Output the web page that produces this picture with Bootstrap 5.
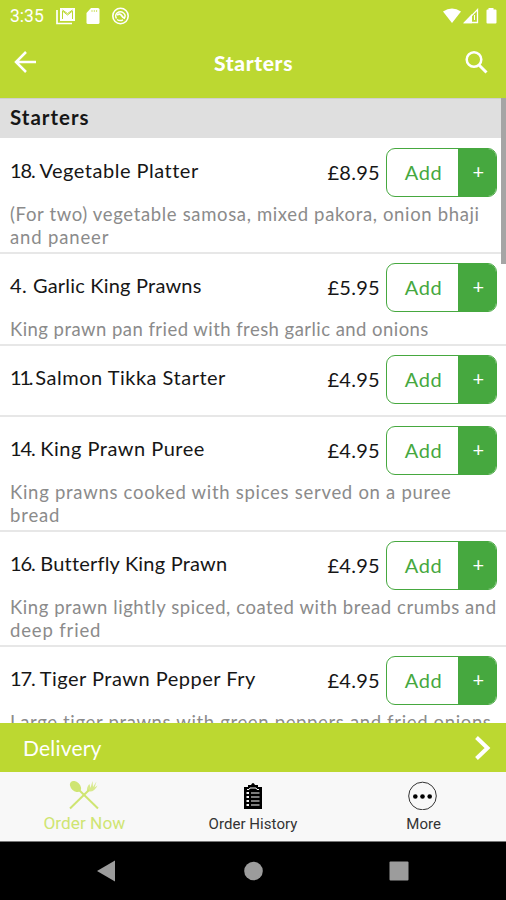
<!DOCTYPE html>
<html lang="en">
<head>
<meta charset="utf-8">
<meta name="viewport" content="width=device-width, initial-scale=1">
<title>Starters</title>
<link href="https://cdn.jsdelivr.net/npm/bootstrap@5.3.0/dist/css/bootstrap.min.css" rel="stylesheet">
<style>
  :root { --lime: #bcd831; --leaf: #46a83f; }
  body { font-family: Lato, "Open Sans", sans-serif; color: #161616; }
  svg { display: block; flex: none; }
  .phone { width: 506px; height: 900px; }
  .bg-lime { background: var(--lime); }
  .status { height: 32px; padding: 0 9px 0 10px; font: 17.5px/32px Roboto, sans-serif; }
  .notices { margin-left: 12px; gap: 10px; }
  .titlebar { height: 65.5px; padding: 0 18px 5px 14px; }
  .titlebar h1 { font-size: 21px; font-weight: 900; letter-spacing: .65px; padding-left: 5px; }
  .viewport { height: 625.5px; }
  .group-title { height: 40px; margin-bottom: 1px; background: #dfdfdf; border-top: 1px solid #cfcfcf; font-size: 20.5px; line-height: 36px; font-weight: 700; letter-spacing: 1px; padding-left: 10px; }
  .dish { padding: 9px 9px 0 10px; border-bottom: 2px solid #e7e7e7; }
  .dish-main { height: 49px; }
  .dish-name { font-size: 20px; letter-spacing: .5px; line-height: 45px; }
  .num { letter-spacing: -1.1px; }
  .num-slim { letter-spacing: -2.2px; margin-right: -1.6px; }
  .snug { letter-spacing: .2px; }
  .price { font-size: 20px; letter-spacing: .3px; line-height: 48px; margin-right: 6px; }
  .about { font-size: 18.5px; letter-spacing: .65px; line-height: 23px; color: #8b8b8b; padding: 6px 0 3px; white-space: nowrap; }
  .about.tight { letter-spacing: .56px; }
  .about.tighter { letter-spacing: .45px; }
  .about.loose { letter-spacing: .71px; }
  .about .end { letter-spacing: .85px; }
  .bare { padding-bottom: 11.2px; }
  .add { width: 111px; height: 49px; border: 1.5px solid var(--leaf); border-radius: 9px; color: var(--leaf); background: #fff; font-size: 20px; letter-spacing: .6px; padding: 0; }
  .add .word { padding-left: 2px; }
  .add .plus { width: 38px; background: var(--leaf); color: #fff; padding: 0 0 2px 3px; }
  .thumb { width: 5px; height: 166px; background: #a5a5a5; right: 0; top: 0; }
  .delivery { height: 49px; padding: 0 15px 0 23px; font-size: 21px; letter-spacing: .2px; }
  .tabs { height: 70px; background: #f8f8f8; border-bottom: 1px solid #777; font: 15px/18px Roboto, sans-serif; color: #333; }
  .tabs .caption { margin-top: 5px; letter-spacing: .05px; }
  .tabs .now { color: #cfe572; font-size: 17.3px; }
  .sysnav { height: 58px; background: #000; }
</style>
</head>
<body>
<div class="phone d-flex flex-column overflow-hidden bg-white">
  <header class="bg-lime text-white flex-shrink-0">
    <div class="status d-flex align-items-center">
      <span>3:35</span>
      <div class="notices d-flex align-items-center">
        <svg width="20" height="18" viewBox="0 0 20 18"><path d="M1 3v13.500h15" fill="none" stroke="#fff" stroke-width="1.700"/><path d="M4 1h15v13H4z" fill="#fff"/><path d="M6.500 12V4l5 4 5-4v8M6.500 3l5 3.600 5-3.600" fill="none" stroke="#bcd831" stroke-width="1"/></svg>
        <svg width="14" height="16" viewBox="0 0 14 16"><path d="M5 0h7q1.500 0 1.500 1.500v13q0 1.500-1.500 1.500H2Q.5 16 .5 14.500V5z" fill="#fff"/><path d="M6 2v2M8.300 2v2M10.600 2v2" stroke="#bcd831" stroke-width=".7"/></svg>
        <svg width="20" height="18" viewBox="-1 0 19 18" fill="none" stroke="#fff"><circle cx="9" cy="9" r="7.700" stroke-width="1.600"/><path d="M5 11.500A4.500 4.500 0 0 1 5.500 6Q9 3.500 12 6t.5 5.500M5.500 12.500q3 2 6 .3" stroke-width="1.400"/><path d="M5.500 8q3-2 4.500.5t3.500 3" stroke-width="1.800"/></svg>
      </div>
      <svg class="ms-auto" width="55" height="18" viewBox="0 0 55 18"><path d="M1 4.500Q10-1.500 19 4.500L10 16z" fill="#fff"/><path d="M35.500 2.500V15.500H23z" fill="none" stroke="#fff" stroke-width="1.300"/><path d="M21 16.200L30 7v9.200z" fill="#fff"/><path d="M32.500 8v5" stroke="#fff"/><path d="M46.500 1h5v1.500h2q1 0 1 1v12q0 1-1 1h-8q-1 0-1-1v-12q0-1 1-1h1z" fill="#fff"/></svg>
    </div>
    <div class="titlebar d-flex align-items-center justify-content-between">
      <svg width="24" height="24" viewBox="0 0 24 24" fill="none" stroke="#fff" stroke-width="2.500"><path d="M22 12H2M12 2L2 12l10 10"/></svg>
      <h1 class="m-0">Starters</h1>
      <svg width="24" height="24" viewBox="0 0 24 24" fill="none" stroke="#fff"><circle cx="10" cy="9.500" r="7.300" stroke-width="2.500"/><path d="M14.500 14.500L22.500 22.500" stroke-width="3"/></svg>
    </div>
  </header>

  <main class="viewport position-relative overflow-hidden flex-shrink-0">
    <div class="group-title">Starters</div>
    <div class="dish">
      <div class="dish-main d-flex"><span class="dish-name me-auto"><span class="num">18.</span> Vegetable Platter</span><span class="price">£8.95</span><button class="add d-flex overflow-hidden align-items-stretch"><span class="word flex-fill align-self-center">Add</span><span class="plus d-flex align-items-center justify-content-center">+</span></button></div>
      <div class="about">(For two) vegetable samosa, mixed pakora, onion bhaji<br><span class="end">and paneer</span></div>
    </div>
    <div class="dish">
      <div class="dish-main d-flex"><span class="dish-name me-auto">4. <span class="snug">Garlic King Prawns</span></span><span class="price">£5.95</span><button class="add d-flex overflow-hidden align-items-stretch"><span class="word flex-fill align-self-center">Add</span><span class="plus d-flex align-items-center justify-content-center">+</span></button></div>
      <div class="about tighter">King prawn pan fried with fresh garlic and onions</div>
    </div>
    <div class="dish bare">
      <div class="dish-main d-flex"><span class="dish-name me-auto"><span class="num-slim">11.</span> Salmon Tikka Starter</span><span class="price">£4.95</span><button class="add d-flex overflow-hidden align-items-stretch"><span class="word flex-fill align-self-center">Add</span><span class="plus d-flex align-items-center justify-content-center">+</span></button></div>
    </div>
    <div class="dish">
      <div class="dish-main d-flex"><span class="dish-name me-auto"><span class="num">14.</span> King Prawn Puree</span><span class="price">£4.95</span><button class="add d-flex overflow-hidden align-items-stretch"><span class="word flex-fill align-self-center">Add</span><span class="plus d-flex align-items-center justify-content-center">+</span></button></div>
      <div class="about loose">King prawns cooked with spices served on a puree<br><span class="end">bread</span></div>
    </div>
    <div class="dish">
      <div class="dish-main d-flex"><span class="dish-name me-auto"><span class="num">16.</span> <span class="snug">Butterfly King Prawn</span></span><span class="price">£4.95</span><button class="add d-flex overflow-hidden align-items-stretch"><span class="word flex-fill align-self-center">Add</span><span class="plus d-flex align-items-center justify-content-center">+</span></button></div>
      <div class="about tight">King prawn lightly spiced, coated with bread crumbs and<br><span class="end">deep fried</span></div>
    </div>
    <div class="dish">
      <div class="dish-main d-flex"><span class="dish-name me-auto"><span class="num">17.</span> Tiger Prawn Pepper Fry</span><span class="price">£4.95</span><button class="add d-flex overflow-hidden align-items-stretch"><span class="word flex-fill align-self-center">Add</span><span class="plus d-flex align-items-center justify-content-center">+</span></button></div>
      <div class="about">Large tiger prawns with green peppers and fried onions</div>
    </div>
    <div class="thumb position-absolute"></div>
  </main>

  <div class="delivery bg-lime text-white d-flex align-items-center justify-content-between flex-shrink-0">
    <span>Delivery</span>
    <svg width="17" height="26" viewBox="0 0 17 26"><path d="M2.500 2.500L13.500 13 2.500 23.500" fill="none" stroke="#fff" stroke-width="4"/></svg>
  </div>

  <nav class="tabs row g-0 text-center flex-shrink-0">
    <div class="col d-flex flex-column align-items-center pt-2 now">
      <svg width="30" height="30" viewBox="0 0 30 30" fill="none" stroke="currentColor"><ellipse cx="6.500" cy="6.500" rx="4.500" ry="6.500" transform="rotate(-45 6.500 6.500)" fill="currentColor" stroke="none"/><path d="M9 9l20 19.500" stroke-width="2"/><path d="M1 28.500L20 10" stroke-width="2"/><path d="M18 11q-.5-4 2.500-7l1 4 2-7 .5 6 3.500-5.500-2 6 3-2q-3 6-7.500 6z" fill="currentColor" stroke="none" opacity=".8"/></svg>
      <span class="mt-1">Order Now</span>
    </div>
    <div class="col d-flex flex-column align-items-center pt-2">
      <svg width="20" height="30" viewBox="0 0 20 30"><path d="M1 7h4V5h3q2-4 4 0h3v2h4v22H1z" fill="#000"/><path d="M4 9.500h2l1-1.500h6l1 1.500h2" fill="none" stroke="#f8f8f8"/><path d="M3.500 13H6M3.500 17H6M3.500 21H6M3.500 25H6" stroke="#f8f8f8" stroke-width="2.200"/><path d="M8 13h8.500M8 17h8.500M8 21h8.500M8 25h8.500" stroke="#f8f8f8" stroke-width="1.200"/></svg>
      <span class="caption">Order History</span>
    </div>
    <div class="col d-flex flex-column align-items-center pt-2">
      <svg width="30" height="30" viewBox="0 0 30 30"><circle cx="15.500" cy="16" r="13.800" fill="none" stroke="#333" stroke-width="1"/><circle cx="8.300" cy="16.500" r="2.300"/><circle cx="15.500" cy="16.500" r="2.300"/><circle cx="22.700" cy="16.500" r="2.300"/></svg>
      <span class="caption ps-1">More</span>
    </div>
  </nav>

  <div class="sysnav flex-shrink-0">
    <svg width="506" height="58" viewBox="0 0 506 58" fill="#9c9c9c"><path d="M97 29l18-10.500v21z"/><circle cx="253.500" cy="29" r="9.300"/><rect x="389.500" y="19.500" width="19" height="19" rx="1"/></svg>
  </div>
</div>
<script src="https://cdn.jsdelivr.net/npm/bootstrap@5.3.0/dist/js/bootstrap.bundle.min.js"></script>
</body>
</html>
